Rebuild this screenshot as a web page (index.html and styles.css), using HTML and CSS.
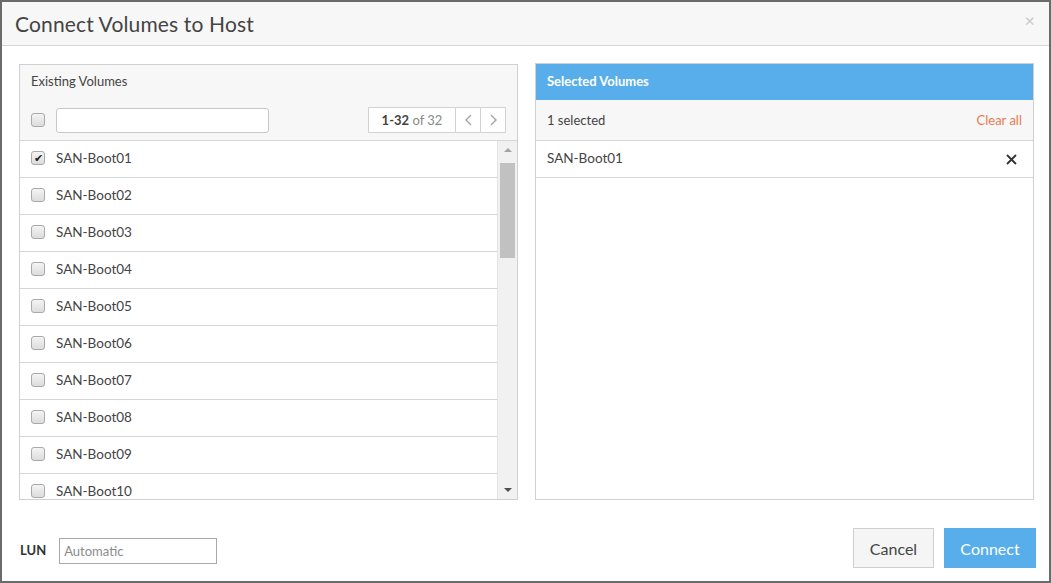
FILE: index.html
```html
<!DOCTYPE html>
<html lang="en">
<head>
    <meta charset="UTF-8">
    <meta name="viewport" content="width=device-width, initial-scale=1.0">
    <title>Connect Volumes to Host</title>
    <link rel="stylesheet" href="styles.css">
</head>
<body>
    <div class="dialog">
        <header class="dialog-header">
            <h1>Connect Volumes to Host</h1>
            <span class="close">&times;</span>
        </header>
        <div class="dialog-body">
            <!-- Existing volumes -->
            <div class="panel">
                <div class="panel-top">
                    <div class="panel-title">Existing Volumes</div>
                    <div class="toolbar">
                        <span class="check"></span>
                        <input type="text" class="filter">
                        <div class="pager">
                            <span class="pager-count"><b>1-32</b> of 32</span>
                            <span class="pager-btn"><svg width="7" height="12" viewBox="0 0 7 12"><path d="M6 1L1 6L6 11" fill="none" stroke="#a0a0a0" stroke-width="1.3"/></svg></span>
                            <span class="pager-btn"><svg width="7" height="12" viewBox="0 0 7 12"><path d="M1 1L6 6L1 11" fill="none" stroke="#a0a0a0" stroke-width="1.3"/></svg></span>
                        </div>
                    </div>
                </div>
                <div class="list-wrap">
                    <div class="list">
                        <div class="row"><span class="check checked">&#10004;</span>SAN-Boot01</div>
                        <div class="row"><span class="check"></span>SAN-Boot02</div>
                        <div class="row"><span class="check"></span>SAN-Boot03</div>
                        <div class="row"><span class="check"></span>SAN-Boot04</div>
                        <div class="row"><span class="check"></span>SAN-Boot05</div>
                        <div class="row"><span class="check"></span>SAN-Boot06</div>
                        <div class="row"><span class="check"></span>SAN-Boot07</div>
                        <div class="row"><span class="check"></span>SAN-Boot08</div>
                        <div class="row"><span class="check"></span>SAN-Boot09</div>
                        <div class="row"><span class="check"></span>SAN-Boot10</div>
                    </div>
                    <div class="scrollbar">
                        <span class="arrow up"></span>
                        <div class="track"><div class="thumb"></div></div>
                        <span class="arrow down"></span>
                    </div>
                </div>
            </div>

            <!-- Selected volumes -->
            <div class="panel selected">
                <div class="panel-title blue">Selected Volumes</div>
                <div class="sel-bar">
                    <span>1 selected</span>
                    <a class="clear">Clear all</a>
                </div>
                <div class="sel-row">
                    <span>SAN-Boot01</span>
                    <svg class="remove" width="11" height="11" viewBox="0 0 11 11"><path d="M1 1L10 10M10 1L1 10" stroke="#333" stroke-width="1.8"/></svg>
                </div>
            </div>
        </div>
        <footer class="dialog-footer">
            <label class="lun">LUN</label>
            <input type="text" class="lun-input" placeholder="Automatic">
            <div class="actions">
                <button class="btn-cancel">Cancel</button>
                <button class="btn-connect">Connect</button>
            </div>
        </footer>
    </div>
</body>
</html>
```

FILE: styles.css
```css
body {
    margin: 0;
    font-family: Lato, "Open Sans", sans-serif;
    color: #444;
    background-color: #fff;
}
.dialog {
    width: 1051px;
    height: 583px;
    box-sizing: border-box;
    border: 2px solid #6b6b6b;
    display: flex;
    flex-direction: column;
    background-color: #fff;
}
.dialog-header {
    height: 43px;
    background-color: #f7f7f7;
    border-bottom: 1px solid #d4d4d4;
    display: flex;
    align-items: center;
    justify-content: space-between;
    padding: 0 14px 0 13px;
}
.dialog-header h1 {
    margin: 0;
    font-size: 21px;
    font-weight: normal;
    color: #444;
    letter-spacing: 0.15px;
}
.close {
    font-size: 18px;
    color: #c8c8c8;
    margin-top: -8px;
}
.dialog-body {
    display: flex;
    gap: 17px;
    padding: 18px 15px 0 17px;
}
.panel {
    width: 500px;
    height: 436px;
    box-sizing: border-box;
    border: 1px solid #d0d0d0;
    display: flex;
    flex-direction: column;
    font-size: 13px;
}
.panel.selected {
    margin-top: -1px;
    height: 437px;
}
.panel-top {
    background-color: #f7f7f7;
    border-bottom: 1px solid #d6d6d6;
}
.panel-title {
    height: 35px;
    line-height: 33px;
    padding-left: 11px;
    color: #444;
}
.panel-title.blue {
    background-color: #57aeea;
    color: #fff;
    font-weight: bold;
    line-height: 34px;
    height: 36px;
}
.toolbar {
    display: flex;
    align-items: center;
    height: 40px;
    padding: 0 11px;
}
.check {
    display: inline-block;
    width: 12px;
    height: 12px;
    border: 1px solid #a9a9a9;
    border-radius: 3px;
    background: linear-gradient(#f4f4f4, #dcdcdc);
    margin-right: 11px;
    font-size: 11px;
    line-height: 12px;
    text-align: center;
    color: #222;
    flex-shrink: 0;
}
.filter {
    width: 213px;
    height: 25px;
    box-sizing: border-box;
    border: 1px solid #c8c8c8;
    border-radius: 3px;
    padding: 0 6px;
}
.pager {
    margin-left: auto;
    display: flex;
    height: 26px;
    border: 1px solid #d2d2d2;
    box-sizing: border-box;
    background-color: #fff;
}
.pager-count {
    width: 86px;
    text-align: center;
    line-height: 24px;
    color: #8a8a8a;
    border-right: 1px solid #d2d2d2;
}
.pager-count b {
    color: #444;
}
.pager-btn {
    width: 24px;
    display: flex;
    align-items: center;
    justify-content: center;
}
.pager-btn + .pager-btn {
    border-left: 1px solid #d2d2d2;
}
.list-wrap {
    flex: 1;
    display: flex;
    overflow: hidden;
}
.list {
    flex: 1;
}
.row {
    height: 34px;
    padding-bottom: 2px;
    border-bottom: 1px solid #d6d6d6;
    display: flex;
    align-items: center;
    padding-left: 11px;
    color: #444;
    font-size: 13.5px;
}
.scrollbar {
    width: 19px;
    background-color: #f1f1f1;
    border-left: 1px solid #e4e4e4;
    display: flex;
    flex-direction: column;
    align-items: center;
}
.track {
    flex: 1;
    width: 100%;
    padding: 0 2px;
    box-sizing: border-box;
}
.thumb {
    height: 95px;
    margin-top: 4px;
    background-color: #c1c1c1;
}
.arrow {
    width: 0;
    height: 0;
    border-left: 4px solid transparent;
    border-right: 4px solid transparent;
    margin: 7px 0;
}
.arrow.up {
    border-bottom: 4px solid #a3a3a3;
}
.arrow.down {
    border-top: 4px solid #505050;
}
.sel-bar {
    height: 40px;
    background-color: #f7f7f7;
    border-bottom: 1px solid #d6d6d6;
    display: flex;
    align-items: center;
    justify-content: space-between;
    padding: 0 11px;
}
.clear {
    color: #ea7a50;
    cursor: pointer;
}
.sel-row {
    height: 36px;
    border-bottom: 1px solid #d6d6d6;
    display: flex;
    align-items: center;
    justify-content: space-between;
    padding: 0 16px 0 11px;
    font-size: 13.5px;
}
.sel-row span {
    margin-top: -2px;
}
.dialog-footer {
    flex: 1;
    display: flex;
    align-items: flex-end;
    padding: 0 13px 13px 18px;
}
.lun {
    font-size: 13px;
    font-weight: bold;
    color: #333;
    margin-right: 13px;
    margin-bottom: 11px;
    line-height: 1;
}
.lun-input {
    width: 158px;
    height: 26px;
    box-sizing: border-box;
    border: 1px solid #a8a8a8;
    padding: 0 4px;
    font-family: inherit;
    font-size: 13px;
    margin-bottom: 4px;
}
.lun-input::placeholder {
    color: #8a8a8a;
}
.actions {
    margin-left: auto;
    display: flex;
    gap: 10px;
}
.actions button {
    height: 40px;
    font-family: inherit;
    font-size: 16px;
    cursor: pointer;
}
.btn-cancel {
    width: 81px;
    background-color: #f5f5f5;
    border: 1px solid #cfcfcf;
    color: #444;
}
.btn-connect {
    width: 92px;
    background-color: #57aeea;
    border: 1px solid #57aeea;
    color: #fff;
}
```
